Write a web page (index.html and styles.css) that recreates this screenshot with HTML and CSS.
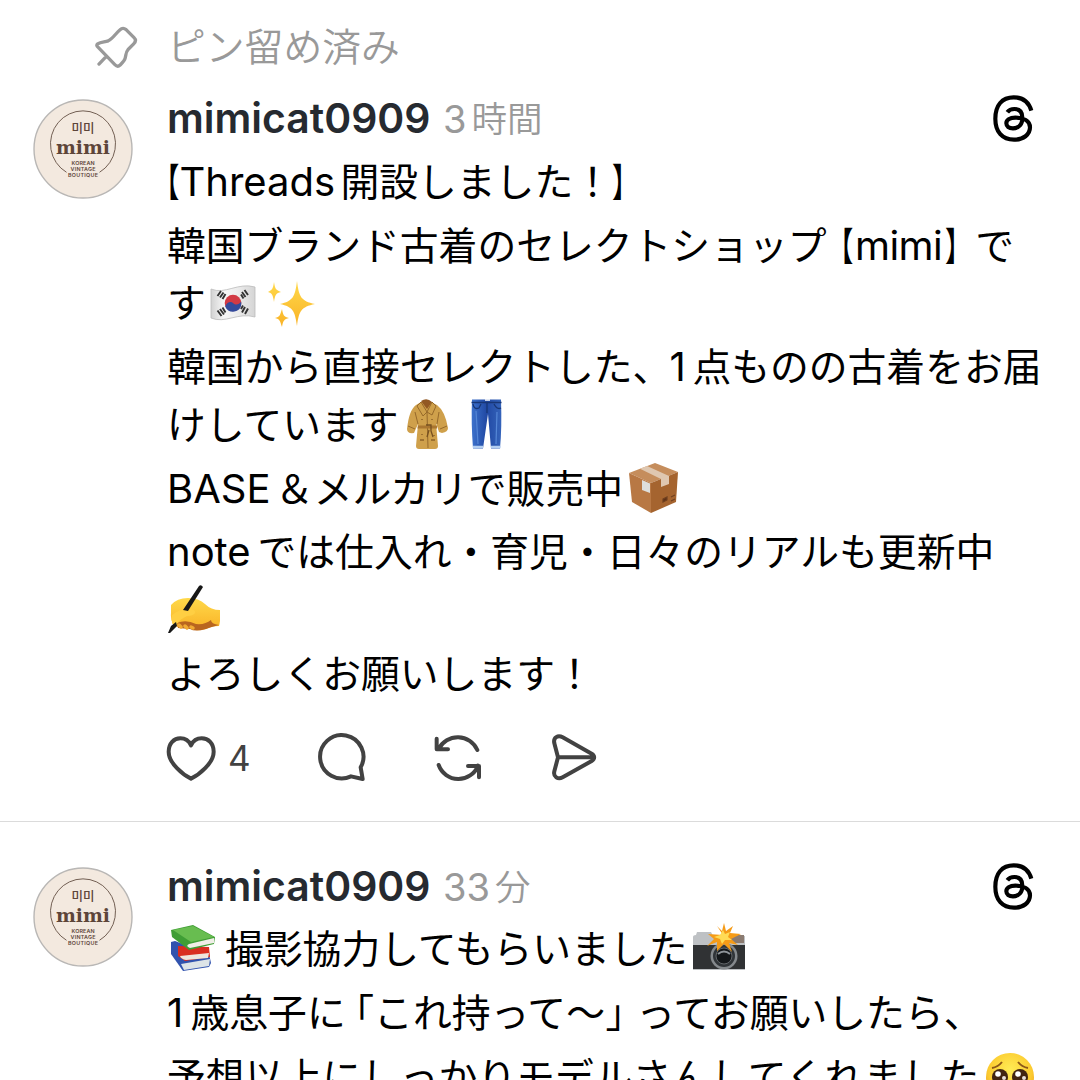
FILE: index.html
```html
<!DOCTYPE html>
<html lang="ja">
<head>
<meta charset="utf-8">
<title>mimicat0909</title>
<link rel="stylesheet" href="styles.css">
</head>
<body>
<svg class="defs" aria-hidden="true">
  <defs>
    <linearGradient id="gold" x1="0" y1="0" x2="0" y2="1"><stop offset="0" stop-color="#ffd94a"/><stop offset="1" stop-color="#f9b226"/></linearGradient>
    <linearGradient id="denim" x1="0" y1="0" x2="1" y2="0"><stop offset="0" stop-color="#3d72cc"/><stop offset=".5" stop-color="#2149a4"/><stop offset="1" stop-color="#3564bb"/></linearGradient>
    <linearGradient id="cloth" x1="0" y1="0" x2="1" y2="0"><stop offset="0" stop-color="#d2d2d2"/><stop offset=".3" stop-color="#f7f7f7"/><stop offset=".6" stop-color="#ececec"/><stop offset="1" stop-color="#d5d5d5"/></linearGradient>
    <radialGradient id="face" cx=".5" cy=".35" r=".65"><stop offset="0" stop-color="#ffec55"/><stop offset=".7" stop-color="#fccb30"/><stop offset="1" stop-color="#eda12a"/></radialGradient>
    <symbol id="avatar" viewBox="33 99 100 100">
      <circle cx="83" cy="149" r="49" fill="#f3e9df" stroke="#b9b7b5" stroke-width="1.4"/>
      <path d="M66.5 172.3A32.5 33 0 1 1 99.5 172.3" fill="none" stroke="#725f53" stroke-width="1"/>
      <g fill="#5d4539" text-anchor="middle">
        <text class="a-hangul" x="83" y="133.2" textLength="23" lengthAdjust="spacingAndGlyphs">미미</text>
        <text class="a-name" x="83" y="154.3" textLength="54" lengthAdjust="spacingAndGlyphs">mimi</text>
        <text class="a-sub" x="83" y="165" textLength="23">KOREAN</text>
        <text class="a-sub" x="83" y="171.2" textLength="25">VINTAGE</text>
        <text class="a-sub" x="83" y="177.3" textLength="30">BOUTIQUE</text>
      </g>
    </symbol>
    <symbol id="threads" viewBox="96 38 129 150">
      <path d="M214 91C206 65 188 51 161 51C126 51 106 75 106 115C106 155 127 178 162 178C190 178 210 163 210 141C210 121 190 112 166 112C149 112 139 119 139 129C139 138 147 144 159 144C177 144 187 132 187 112C187 95 178 86 163 86C154 86 147 89 142 96" fill="none" stroke="#000" stroke-width="12.5"/>
    </symbol>
  </defs>
</svg>

<main class="feed">
  <div class="pinned">
    <svg class="pin" viewBox="225 45 130 130"><path d="M233 99C243 92 255 94 265 90C279 83 289 66 300 57C306 51 313 51 319 56L343 80C349 86 348 93 342 99L325 116C318 124 319 132 316 143C314 151 307 157 301 163C296 168 290 167 285 162L234 109C230 105 229 102 233 99ZM260 136L237 160"/></svg>
    <span class="pin-label">ピン留め済み</span>
  </div>

  <article class="post">
    <svg class="avatar"><use href="#avatar"/></svg>
    <div class="content">
      <header class="head"><span class="user">mimicat0909</span><span class="time"><span class="num">3</span>時間</span><svg class="threads"><use href="#threads"/></svg></header>
      <div class="text">
        <p><span class="line"><span class="half open first">【</span><span class="latin w-threads">Threads</span>開設しました！<span class="half shut">】</span></span></p>
        <p><span class="line">韓国ブランド古着のセレクトショップ<span class="half open mid">【</span><span class="latin w-mimi">mimi</span><span class="half shut close">】</span>で</span>
        <span class="line">す<svg class="emoji flag" viewBox="0 0 52 52"><path d="M4 12C18 18 31 5 48 10V40C31 35 18 47 4 41Z" fill="url(#cloth)" stroke="#bbb" stroke-width=".8"/><circle cx="26" cy="26" r="8.3" fill="#d23a44"/><path d="M18.2 29.5C20 25 24 24 26.2 26.2S32 28 34.2 24.5C36 36 21 38 18.2 29.5Z" fill="#334b9c"/><path d="M10.500 19l3.500-5M13 20.500l3.500-5M15.500 22l3-5M35 15l3.500 5M37.500 13l3.500 5M34 17.500l2.500 4M10.500 33.500l4 5.500M13 32l4 5.500M15.500 30.500l3 5M35 35.500l3-5.500M38 37l3-5.500M34 32l2-3.500" stroke="#333" stroke-width="1.9"/></svg><svg class="emoji sparkle" viewBox="0 0 52 52" fill="url(#gold)"><path d="M32 4C34 20 36 24 50 27C36 30 34 34 32 49C30 34 28 30 15 27C28 24 30 20 32 4ZM9 5C10 12 11 13 16 15C11 16 10 18 9 25C8 18 7 16 3 15C7 13 8 12 9 5ZM17 32C18 38 19 40 24 41C19 42 18 44 17 50C15 44 15 42 10 41C15 40 15 38 17 32Z"/></svg></span></p>
        <p><span class="line">韓国から直接セレクトした、<span class="latin w-item">1</span>点ものの古着をお届</span>
        <span class="line">けしています<svg class="emoji coat" viewBox="0 0 52 52"><path d="M19 4L29 4L35 7Q43 13 46 30Q46 34 40 35L37 34L34 25L36 48Q36 51 33 51H17Q14 51 14 48L16 26L12 35Q5 36 5 31Q7 12 14 7Z" fill="#cfa04b"/><path d="M19 3Q25-1 30 4L25 11Z" fill="#925923"/><path d="M15 8L19 4L25 14L30 4L34 8L30 17L25 14L21 18ZM25 14L26 50M13 14L16 26M37 14L35 26M6 28L13 31M38 31L45 28" fill="none" stroke="#96692a" stroke-width="1"/><path d="M16 27.500H35V30.500H15.500Z" fill="#aa7630"/><path d="M24 27H29V33L31 39M27 32L25 39" fill="none" stroke="#765020" stroke-width="1.300"/><path d="M20 21v1M30 21v1M20 36v1M32 37v1M18 42h4M29 42h4" stroke="#8d6128" stroke-width="1.500"/></svg><svg class="emoji jeans" viewBox="0 0 52 52"><path d="M11 1.500H40Q41 30 39 50.500H30L27 16L22 50.500H12Q10 25 11 1.500Z" fill="url(#denim)"/><path d="M10.500 4.500H40.500M26 4V15M12 6Q13 12 18 10L20 6M33 6Q36 12 40 10" fill="none" stroke="#183675" stroke-width="1.300"/><path d="M12 49H22M30 49H39.500" stroke="#b3cef1" stroke-width="2.500"/><path d="M15 13L17 46M36 14L35 46" stroke="#5587d6" stroke-width="1.200"/><path d="M24 2H29" stroke="#fff" stroke-width="1.500"/></svg></span></p>
        <p><span class="line"><span class="latin w-base">BASE</span>＆メルカリで販売中<svg class="emoji box" viewBox="0 0 52 52"><path d="M1 11L27 1L50 10L23 21Z" fill="#c58d5c"/><path d="M1 11L23 21V51L4 40Z" fill="#b87844"/><path d="M23 21L50 10L48 40L23 51Z" fill="#a5642f"/><path d="M12 6.700L19 4L41 14V22L33 25V17Z" fill="#dfc7b0"/><path d="M14 18L22 21.500V31L14 28Z" fill="#dedfdd"/><path d="M35 37l4-2v3l-4 2zM43 35l4-2M43 39l4-2" fill="#5f3218" stroke="#70401f" stroke-width="1.200"/></svg></span></p>
        <p><span class="line"><span class="latin w-note">note</span>では仕入れ・育児・日々のリアルも更新中</span>
        <span class="line"><svg class="emoji hand" viewBox="0 0 52 52"><path d="M3 21Q9 14 20 14Q31 14 37 20Q43 26 52 26Q53 35 51 42Q43 42 38 45Q27 48 22 44L10 43Q2 41 3 29Z" fill="url(#gold)"/><path d="M9 39Q18 35 28 40Q37 41 43 36Q43 40 51 41Q43 43 38 45Q27 48 22 45L10 44Z" fill="#b9651f"/><path d="M4 31Q11 25 20 25Q28 25 27 29Q25 32 19 32Q12 35 9 40Q6 43 4 39Z" fill="#ffcf43"/><path d="M11 41L13 43M17 42L19 44M23 43L25 44" stroke="#f0aa34" stroke-width="3.500" stroke-linecap="round"/><path d="M31 2Q33 0 35 3L20 27L15 26ZM8 38L3 42L0 49H2L9 42Z" fill="#171717"/></svg></span></p>
        <p><span class="line">よろしくお願いします！</span></p>
      </div>
      <div class="actions">
        <svg viewBox="48 39 150 150"><path d="M123 176C100 165 56 130 56 95C56 70 72 55 91 55C106 55 117 63 123 76C129 63 140 55 155 55C175 55 191 70 191 95C191 130 146 165 123 176Z"/></svg>
        <span class="count">4</span>
        <svg viewBox="498 39 150 150"><path d="M603 169A65 65 0 1 1 632 142L638 177Z"/></svg>
        <svg viewBox="849 39 150 150"><path d="M866 87A64 64 0 0 1 982 90M860 56V88H894M866 135A63 63 0 0 0 984 137M987 172V138H954" stroke-linecap="round"/></svg>
        <svg viewBox="1200 39 150 150"><path d="M1213 70C1209 52 1224 44 1238 52L1325 101C1335 107 1335 117 1325 123L1238 172C1224 180 1209 170 1213 154L1224 112ZM1224 112H1330"/></svg>
      </div>
    </div>
  </article>

  <article class="post second">
    <svg class="avatar"><use href="#avatar"/></svg>
    <div class="content">
      <header class="head"><span class="user">mimicat0909</span><span class="time"><span class="num">33</span>分</span><svg class="threads"><use href="#threads"/></svg></header>
      <div class="text">
        <p><span class="line"><svg class="emoji books" viewBox="0 0 52 52"><path d="M4 19L8 18L42 31L44 40L42 44L16 48L4 31Z" fill="#3153ae"/><path d="M14 41L43 36L42 43L17 47Z" fill="#dde4e7"/><path d="M11 23L42 24L43 34L18 38L11 33Z" fill="#d92d20"/><path d="M13 33L42 30L41 35L19 37Q14 36 13 33Z" fill="#eee5dd"/><path d="M4 7L26 2L48 14L47 21L22 27L5 14Z" fill="#3f9e35"/><path d="M6 7L26 3L47 14L24 19Z" fill="#68bd50"/><path d="M22 21L47 15V20L23 25Q18 23 22 21Z" fill="#f0eee7"/></svg>撮影協力してもらいました<svg class="emoji camera" viewBox="0 0 52 52"><path d="M0 14Q0 12 3 12L4 9H18L20 13H52V47H0Z" fill="#bec1c4"/><path d="M0 22H52V46H0Z" fill="#303234"/><path d="M38 12H51V20H38Z" fill="#8b7b71"/><circle cx="31" cy="33" r="13.500" fill="#85898d"/><circle cx="31" cy="33" r="11" fill="#303438"/><circle cx="31" cy="33" r="8" fill="#14171a" stroke="#62666a"/><path d="M25 31Q31 26 37 31" fill="none" stroke="#8e949a" stroke-width="2"/><path d="M30 12L24 3L29 8L31 0L33 8L40 3L37 10L48 11L38 16L45 22L36 20L39 29L31 21L24 28L24 19L14 23L21 16L15 11Z" fill="#f59b17"/><path d="M30 7L32 11L37 9L35 14L39 17L32 17L29 21L27 16L21 14L27 12Z" fill="#ffdb55"/></svg></span></p>
        <p><span class="line"><span class="latin w-age">1</span>歳息子に<span class="half kagi">「</span>これ持って〜<span class="half kagi-end">」</span>ってお願いしたら、</span></p>
        <p><span class="line">予想以上にしっかりモデルさんしてくれました<svg class="emoji plead" viewBox="0 0 52 52"><circle cx="26" cy="26" r="24" fill="url(#face)"/><path d="M8 17Q14 16 18 11M34 11Q38 16 44 17" fill="none" stroke="#8c5718" stroke-width="2"/><circle cx="16" cy="26" r="8" fill="#432511"/><circle cx="36" cy="26" r="8" fill="#432511"/><circle cx="14" cy="23" r="2.800" fill="#fff"/><circle cx="34" cy="23" r="2.800" fill="#fff"/><circle cx="20" cy="27" r="2" fill="#e9e0d9"/><circle cx="40" cy="27" r="2" fill="#e9e0d9"/></svg></span></p>
      </div>
    </div>
  </article>
</main>
</body>
</html>
```
FILE: styles.css
```css
* { box-sizing: border-box; }
html, body { height: 1080px; overflow: hidden; }
body {
  margin: 0;
  background: #fff;
  color: #000;
  font-family: "Noto Sans CJK JP", sans-serif;
  font-size: 38.8px;
}
svg { flex: none; display: block; }
.defs { position: absolute; width: 0; height: 0; }
.feed { height: 1080px; overflow: hidden; padding-top: 18px; }

.pinned {
  display: flex;
  align-items: center;
  height: 58px;
  padding-left: 95px;
  gap: 29px;
  color: #999;
  font-weight: 350;
}
.pin-label { height: 58px; line-height: 53px; }
.pin { width: 43px; height: 43px; fill: none; stroke: #999; stroke-width: 10; stroke-linejoin: round; stroke-linecap: round; }

.post { display: flex; padding: 14px 46px 37.500px 33px; border-bottom: 1px solid #dbdbdb; }
.post.second { padding-top: 36px; border: 0; }
.avatar { width: 100px; height: 100px; margin: 9px 34px 0 0; }
.a-hangul { font: 500 12.500px "Noto Sans CJK KR", sans-serif; }
.a-name { font: 700 19px "DejaVu Serif", serif; }
.a-sub { font: 600 5.400px Inter, sans-serif; }
.content { flex: 1; min-width: 0; }

.head { display: flex; align-items: flex-start; height: 58px; white-space: nowrap; }
.user { font: 600 40.900px/57px Inter, sans-serif; color: #262a30; width: 276px; }
.time { color: #999; font-size: 35.500px; line-height: 54px; display: flex; gap: 5px; font-weight: 350; }
.num { font: 400 38px/58px Inter, sans-serif; }
.threads { width: 43px; height: 50px; margin: 3px -1px 0 auto; }

.text { padding-top: 5.200px; white-space: nowrap; }
.second .text { padding-top: 4.800px; }
p { margin: 0 0 6.300px; }
.line { display: flex; align-items: flex-start; height: 57.500px; line-height: 53px; }
.latin { flex: none; font: 400 40px/57.500px Inter, sans-serif; }
.half { flex: none; font-feature-settings: "halt"; }
.open { transform: scaleX(.68); transform-origin: right; }
.shut { transform: scaleX(.68); transform-origin: left; }
.first { margin-left: -7px; }
.mid { margin: 0 2px 0 7px; }
.close { margin-right: 10.400px; }
.w-threads { width: 161px; }
.w-mimi { width: 90.500px; letter-spacing: -.6px; }
.w-item { width: 23px; margin-left: -2px; }
.w-age { width: 23.500px; }
.w-base { width: 108px; }
.w-note { width: 90.500px; }
.kagi { margin: 0 0 0 9px; }
.kagi-end { margin: 0 11.500px 0 .5px; }

.emoji { width: 52px; height: 52px; margin-top: 2.700px; }
.flag { margin-left: 1.500px; }
.sparkle { margin-left: 6px; }
.coat { margin-left: 3px; }
.jeans { margin-left: 7px; }
.box { margin-left: 5px; }
.hand { margin-left: 1px; }
.books { margin-right: 6px; }
.camera { margin-left: 6px; }
.plead { margin-left: 5px; }

.actions { display: flex; align-items: center; height: 50px; margin: 31px 0 0 -1px; }
.actions svg { width: 50px; height: 50px; fill: none; stroke: #424242; stroke-width: 12; stroke-linejoin: round; margin-right: 67px; }
.actions svg:first-child { margin-right: 12px; }
.count { width: 88px; font: 400 35px/50px Inter, sans-serif; color: #424242; }
```
